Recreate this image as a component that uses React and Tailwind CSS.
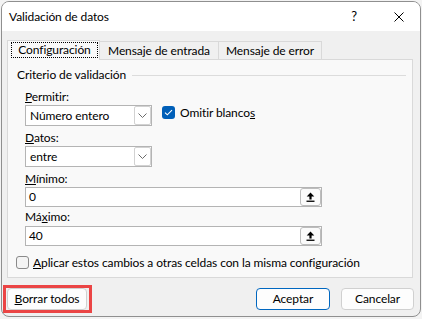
import React from "react";

function Chevron() {
  return (
    <svg width="9" height="5" viewBox="0 0 9 5">
      <polyline points="0.5,0.5 4.5,4.5 8.5,0.5" fill="none" stroke="#6b6b6b" strokeWidth="1" />
    </svg>
  );
}

function UpIcon() {
  return (
    <svg width="9" height="10" viewBox="0 0 9 10">
      <path d="M4.5 0.5 L8.3 4.6 H5.6 V7.6 H3.4 V4.6 H0.7 Z" fill="#000" />
      <rect x="0.5" y="8.6" width="8" height="1.3" fill="#000" />
    </svg>
  );
}

function Combo({ value }) {
  return (
    <div className="w-[127px] h-[21px] border border-[#b4b4b4] bg-white flex items-center">
      <span className="pl-[4px] flex-1 leading-none">{value}</span>
      <div className="w-[17px] h-full border border-[#d2d2d2] rounded-[2px] flex items-center justify-center bg-white">
        <Chevron />
      </div>
    </div>
  );
}

function RefInput({ value }) {
  return (
    <div className="w-[297px] h-[20px] border border-[#b4b4b4] bg-white flex items-center">
      <span className="pl-[3px] flex-1 leading-none">{value}</span>
      <div className="w-[21px] h-full border border-[#bdbdbd] rounded-[3px] bg-[#fbfbfb] flex items-center justify-center">
        <UpIcon />
      </div>
    </div>
  );
}

export default function App() {
  return (
    <div className="w-[422px] h-[319px] bg-[#f3f3f3] pt-px pl-px font-['Segoe_UI','Lato',sans-serif] text-[12px] tracking-[-0.1px] text-black overflow-hidden">
      <div className="w-[420px] h-[316px] rounded-[8px] border border-[#8f8f8f] bg-[#f0f0f0] overflow-hidden flex flex-col">
        {/* Title bar */}
        <div className="h-[29px] bg-white flex items-center pl-[7px] pr-[16px] shrink-0">
          <span className="leading-none">Validación de datos</span>
          <span className="ml-auto w-[20px] text-center leading-none text-[13px]">?</span>
          <span className="ml-[30px] w-[10px] h-[10px] flex">
            <svg width="10" height="10" viewBox="0 0 10 10">
              <line x1="0.5" y1="0.5" x2="9.5" y2="9.5" stroke="#000" strokeWidth="1" />
              <line x1="9.5" y1="0.5" x2="0.5" y2="9.5" stroke="#000" strokeWidth="1" />
            </svg>
          </span>
        </div>

        {/* Body */}
        <div className="pt-[9px] pl-[5px]">
          {/* Tabs */}
          <div className="flex items-end h-[19px]">
            <div className="relative z-10 h-[20px] -mb-px w-[93px] border-l border-t border-r border-[#d9d9d9] bg-[#f9f9f9]">
              <div className="mt-px ml-[3px] w-[87px] h-[16px] border border-dotted border-black flex items-center justify-center">
                <span className="leading-none">Configuración</span>
              </div>
            </div>
            <div className="h-[18px] w-[119px] border-t border-r border-[#d9d9d9] bg-[#f0f0f0] flex items-center justify-center">
              <span className="leading-none">Mensaje de entrada</span>
            </div>
            <div className="h-[18px] w-[103px] border-t border-r border-[#d9d9d9] bg-[#f0f0f0] flex items-center justify-center">
              <span className="leading-none">Mensaje de error</span>
            </div>
          </div>

          {/* Panel */}
          <div className="w-[406px] h-[219px] border border-[#d9d9d9] bg-[#f9f9f9]">
            <div className="mt-[7px] h-[16px] flex items-center pl-[9px]">
              <span className="leading-none">Criterio de validación</span>
              <div className="flex-1 h-px bg-[#dcdcdc] ml-[6px] mr-[6px]" />
            </div>

            <div className="pl-[17px]">
              <div className="mt-[5px] h-[17px] flex items-center">
                <span className="leading-none"><span className="underline">P</span>ermitir:</span>
              </div>
              <div className="flex items-start">
                <Combo value="Número entero" />
                <div className="ml-[10px] mt-px flex items-center">
                  <div className="w-[13px] h-[13px] rounded-[3px] bg-[#005fb8] flex items-center justify-center">
                    <svg width="9" height="7" viewBox="0 0 9 7">
                      <polyline points="1,3.6 3.3,5.8 8,1.2" fill="none" stroke="#fff" strokeWidth="1.1" />
                    </svg>
                  </div>
                  <span className="ml-[5px] leading-none">Omitir blanco<span className="underline">s</span></span>
                </div>
              </div>

              <div className="mt-[3px] h-[17px] flex items-center">
                <span className="leading-none"><span className="underline">D</span>atos:</span>
              </div>
              <Combo value="entre" />

              <div className="mt-[3px] h-[17px] flex items-center">
                <span className="leading-none"><span className="underline">M</span>ínimo:</span>
              </div>
              <RefInput value="0" />

              <div className="mt-px h-[18px] flex items-center">
                <span className="leading-none">Má<span className="underline">x</span>imo:</span>
              </div>
              <RefInput value="40" />
            </div>

            <div className="pl-[8px] mt-[10px] h-[13px] flex items-center">
              <div className="w-[13px] h-[13px] rounded-[3px] border border-[#8a8a8a] bg-[#f4f4f4]" />
              <span className="ml-[4px] leading-none"><span className="underline">A</span>plicar estos cambios a otras celdas con la misma configuración</span>
            </div>
          </div>
        </div>

        {/* Buttons */}
        <div className="mt-[7px] flex items-center">
          <div className="ml-px h-[28px] border-[3px] border-[#eb4545] pl-px pr-[2px] flex items-center">
            <div className="w-[80px] h-[22px] border border-[#d0d0d0] rounded-[4px] bg-[#fdfdfd] flex items-center justify-center">
              <span className="leading-none"><span className="underline">B</span>orrar todos</span>
            </div>
          </div>
          <div className="ml-auto w-[74px] h-[22px] border border-[#0067c0] rounded-[4px] bg-[#fdfdfd] flex items-center justify-center">
            <span className="leading-none">Aceptar</span>
          </div>
          <div className="ml-[11px] mr-[6px] w-[73px] h-[22px] border border-[#d0d0d0] rounded-[4px] bg-[#fdfdfd] flex items-center justify-center">
            <span className="leading-none">Cancelar</span>
          </div>
        </div>
      </div>
    </div>
  );
}
